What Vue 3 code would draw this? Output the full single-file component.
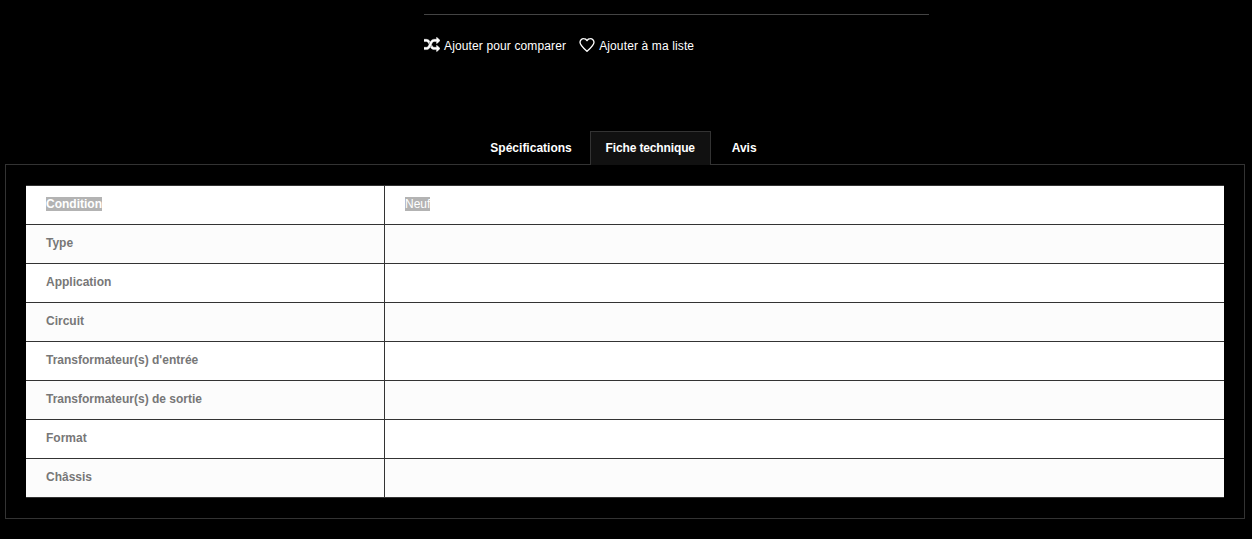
<script setup>
const rows = [
  { label: 'Condition', value: 'Neuf', selected: true },
  { label: 'Type', value: '' },
  { label: 'Application', value: '' },
  { label: 'Circuit', value: '' },
  { label: "Transformateur(s) d'entrée", value: '' },
  { label: 'Transformateur(s) de sortie', value: '' },
  { label: 'Format', value: '' },
  { label: 'Châssis', value: '' }
]
const tabs = [
  { name: 'Spécifications', active: false },
  { name: 'Fiche technique', active: true },
  { name: 'Avis', active: false }
]
</script>

<template>
  <div class="page">
    <section class="summary">
      <div class="actions">
        <a class="action">
          <svg class="icon-shuffle" viewBox="0 0 1792 1792" fill="currentColor" stroke="currentColor" stroke-width="50" aria-hidden="true">
            <path d="M666 481q-60 92-137 273-22-45-37-72.5t-40.5-63.5-51-56.5-63-35-81.5-14.5h-224q-14 0-23-9t-9-23v-192q0-14 9-23t23-9h224q250 0 410 225zm1126 799q0 14-9 23l-320 320q-9 9-23 9-13 0-22.5-9.5t-9.5-22.5v-192q-32 0-85 .5t-81 1-73-1-71-5-64-10.5-63-18.5-58-28.5-59-40-55-53.5-56-69.5q59-93 136-273 22 45 37 72.5t40.5 63.5 51 56.5 63 35 81.5 14.5h256v-192q0-14 9-23t23-9q12 0 24 10l319 319q9 9 9 23zm0-896q0 14-9 23l-320 320q-9 9-23 9-13 0-22.5-9.5t-9.5-22.5v-192h-256q-48 0-87 15t-69 45-51 61.5-45 77.5q-32 62-78 171-29 66-49.5 111t-54 105-64 100-74 83-90 68.5-106.5 42-128 16.5h-224q-14 0-23-9t-9-23v-192q0-14 9-23t23-9h224q48 0 87-15t69-45 51-61.5 45-77.5q32-62 78-171 29-66 49.5-111t54-105 64-100 74-83 90-68.5 106.5-42 128-16.5h256v-192q0-14 9-23t23-9q12 0 24 10l319 319q9 9 9 23z"/>
          </svg>
          <span>Ajouter pour comparer</span>
        </a>
        <a class="action">
          <svg class="icon-heart" viewBox="0 0 24 24" fill="none" stroke="currentColor" stroke-width="2" stroke-linejoin="round" aria-hidden="true">
            <path d="M12 21.5C5.5 15.8 1.5 12.4 1.5 8a5.4 5.4 0 0 1 5.6-5.5c2.1 0 3.9 1 4.9 2.9 1-1.9 2.8-2.9 4.9-2.9A5.4 5.4 0 0 1 22.5 8c0 4.4-4 7.8-10.500 13.500z"/>
          </svg>
          <span>Ajouter à ma liste</span>
        </a>
      </div>
    </section>

    <nav class="tabs">
      <a v-for="tab in tabs" :key="tab.name" class="tab" :class="{ active: tab.active }">{{ tab.name }}</a>
    </nav>

    <section class="panel">
      <table class="specs">
        <tbody>
          <tr v-for="row in rows" :key="row.label">
            <th><span :class="{ selected: row.selected }">{{ row.label }}</span></th>
            <td><span :class="{ selected: row.selected }">{{ row.value }}</span></td>
          </tr>
        </tbody>
      </table>
    </section>
  </div>
</template>

<style>
html, body { margin: 0; background: #000; }
</style>

<style scoped>
.page {
  height: 539px;
  overflow: hidden;
  background: #000;
  padding: 14px 7px 0 5px;
  box-sizing: border-box;
  font-family: "Liberation Sans", Arial, sans-serif;
  font-size: 12px;
  color: #fff;
}
.summary {
  width: 505px;
  margin-left: 419px;
  border-top: 1px solid #444;
  height: 116px;
}
.actions {
  display: flex;
  align-items: center;
  gap: 13px;
  padding-top: 23px;
}
.action {
  display: flex;
  align-items: center;
  gap: 4px;
  color: #fff;
  letter-spacing: 0.13px;
}
.icon-shuffle { width: 16px; height: 16px; margin-top: -1px; }
.icon-heart { width: 16px; height: 16px; margin-top: -2px; }
.tabs {
  display: flex;
  justify-content: center;
  margin-bottom: -1px;
  position: relative;
  height: 34px;
  padding-right: 3px;
}
.tab {
  box-sizing: border-box;
  height: 34px;
  padding: 0 15px;
  line-height: 33px;
  font-weight: 700;
  border: 1px solid transparent;
  border-bottom: 0;
}
.tab.active {
  width: 121px;
  margin: 0 5px 0 2px;
  padding: 0;
  text-align: center;
  letter-spacing: -0.13px;
  background: #111;
  border-color: #333;
}
.panel {
  border: 1px solid #333;
  padding: 20px;
}
.specs {
  width: 1198px;
  table-layout: fixed;
  border-collapse: collapse;
  background: #fff;
}
.specs tr { height: 39px; }
.specs tr:nth-child(even) { background: #fcfcfc; }
.specs th,
.specs td {
  padding: 0 20px 2px;
  border-top: 1px solid #333;
  border-bottom: 1px solid #333;
  text-align: left;
  vertical-align: middle;
}
.specs th {
  width: 318px;
  font-weight: 700;
  color: #777;
  border-right: 1px solid #333;
}
.selected {
  background: #b3b3b3;
  color: #fff;
}
</style>
